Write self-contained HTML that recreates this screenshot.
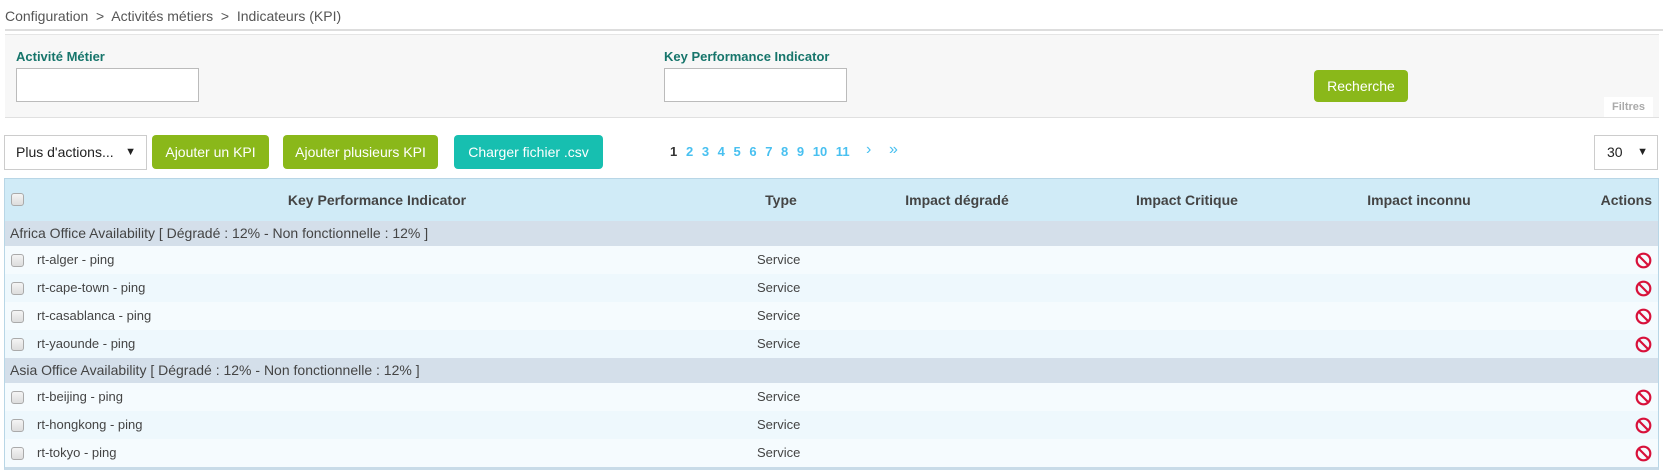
<!DOCTYPE html>
<html><head><meta charset="utf-8"><style>
*{box-sizing:border-box;margin:0;padding:0}
body{width:1663px;height:470px;overflow:hidden;background:#fff;font-family:"Liberation Sans",Arial,sans-serif;color:#333;position:relative}
.a{position:absolute}
.bc{left:5px;top:8px;font-size:14px;color:#555}
.ln{left:5px;top:29px;width:1658px;height:2px;background:#ddd}
.panel{left:5px;top:34px;width:1654px;height:84px;background:#f7f7f7;border-top:1px solid #e5e5e5;border-bottom:1px solid #e0e0e0}
.lbl{font-size:13px;font-weight:bold;color:#16756b}
.inp{background:#fff;border:1px solid #bbb;height:34px;width:183px}
.btn{color:#fff;font-size:14px;text-align:center;border-radius:4px;line-height:34px;height:34px}
.g{background:#8ab81a}.t{background:#17bfb0}
.sel{border:1px solid #ccc;background:#fff;height:35px;font-size:14px;line-height:33px;color:#222}
.pg{top:144px;font-size:13px;font-weight:bold;color:#48c0f0}
.tbl{left:4px;top:178px;width:1655px;height:292px;border:1px solid #b8d6e6;border-bottom:3px solid #c8dbe8;background:#f5fbfe}
.hd{left:0;top:0;width:100%;height:43px;background:#d0ebf7}
.th{top:13px;font-size:14px;font-weight:bold;color:#444;width:300px;text-align:center}
.grp{left:0;width:100%;height:25px;background:#d4dfea;font-size:14px;color:#444;line-height:25px;padding-left:5px}
.row{left:0;width:100%;height:28px;font-size:13px;color:#444;line-height:28px}
.row.e{background:#eef8fd}
.cb{position:absolute;left:6px;top:8px;width:13px;height:13px;border:1px solid #aaa;border-radius:3px;background:linear-gradient(#f4f4f4,#ddd)}
.nm{position:absolute;left:32px}
.sv{position:absolute;left:752px}
.ic{position:absolute;left:1630px;top:6px}
</style></head><body>
<div class="a bc">Configuration &nbsp;&gt;&nbsp; Activités métiers &nbsp;&gt;&nbsp; Indicateurs (KPI)</div>
<div class="a ln"></div>
<div class="a panel"></div>
<div class="a lbl" style="left:16px;top:49px">Activité Métier</div>
<div class="a inp" style="left:16px;top:68px"></div>
<div class="a lbl" style="left:664px;top:49px">Key Performance Indicator</div>
<div class="a inp" style="left:664px;top:68px"></div>
<div class="a btn g" style="left:1314px;top:70px;width:94px;height:32px;line-height:32px">Recherche</div>
<div class="a" style="left:1604px;top:97px;width:49px;height:20px;background:#fff;font-size:11px;font-weight:bold;color:#aaa;text-align:center;line-height:20px">Filtres</div>

<div class="a sel" style="left:4px;top:135px;width:143px;padding-left:11px">Plus d'actions...<span style="position:absolute;right:10px;font-size:11px">▼</span></div>
<div class="a btn g" style="left:152px;top:135px;width:117px">Ajouter un KPI</div>
<div class="a btn g" style="left:283px;top:135px;width:155px">Ajouter plusieurs KPI</div>
<div class="a btn t" style="left:454px;top:135px;width:149px">Charger fichier .csv</div>
<div class="a pg" style="left:670px;color:#333">1</div>
<div class="a pg" style="left:686px;word-spacing:5px">2 3 4 5 6 7 8 9 10 11</div>
<div class="a pg" style="left:866px;font-weight:normal;font-size:16px;top:141px">›</div>
<div class="a pg" style="left:889px;font-weight:normal;font-size:16px;top:141px">»</div>
<div class="a sel" style="left:1594px;top:135px;width:64px;padding-left:12px">30<span style="position:absolute;right:9px;font-size:11px">▼</span></div>

<div class="a tbl">
<div class="a hd"><span class="cb" style="top:14px"></span></div>
<div class="a th" style="left:222px">Key Performance Indicator</div>
<div class="a th" style="left:626px">Type</div>
<div class="a th" style="left:802px">Impact dégradé</div>
<div class="a th" style="left:1032px">Impact Critique</div>
<div class="a th" style="left:1264px">Impact inconnu</div>
<div class="a th" style="left:1347px;text-align:right">Actions</div>

<div class="a grp" style="top:42px">Africa Office Availability [ Dégradé : 12% - Non fonctionnelle : 12% ]</div>
<div class="a row" style="top:67px"><span class="cb"></span><span class="nm">rt-alger - ping</span><span class="sv">Service</span><svg class="ic" width="17" height="17" viewBox="0 0 17 17"><circle cx="8.5" cy="8.5" r="6.8" fill="none" stroke="#d8113a" stroke-width="2.2"/><line x1="4" y1="4" x2="13" y2="13" stroke="#d8113a" stroke-width="2.2"/></svg></div>
<div class="a row e" style="top:95px"><span class="cb"></span><span class="nm">rt-cape-town - ping</span><span class="sv">Service</span><svg class="ic" width="17" height="17" viewBox="0 0 17 17"><circle cx="8.5" cy="8.5" r="6.8" fill="none" stroke="#d8113a" stroke-width="2.2"/><line x1="4" y1="4" x2="13" y2="13" stroke="#d8113a" stroke-width="2.2"/></svg></div>
<div class="a row" style="top:123px"><span class="cb"></span><span class="nm">rt-casablanca - ping</span><span class="sv">Service</span><svg class="ic" width="17" height="17" viewBox="0 0 17 17"><circle cx="8.5" cy="8.5" r="6.8" fill="none" stroke="#d8113a" stroke-width="2.2"/><line x1="4" y1="4" x2="13" y2="13" stroke="#d8113a" stroke-width="2.2"/></svg></div>
<div class="a row e" style="top:151px"><span class="cb"></span><span class="nm">rt-yaounde - ping</span><span class="sv">Service</span><svg class="ic" width="17" height="17" viewBox="0 0 17 17"><circle cx="8.5" cy="8.5" r="6.8" fill="none" stroke="#d8113a" stroke-width="2.2"/><line x1="4" y1="4" x2="13" y2="13" stroke="#d8113a" stroke-width="2.2"/></svg></div>
<div class="a grp" style="top:179px">Asia Office Availability [ Dégradé : 12% - Non fonctionnelle : 12% ]</div>
<div class="a row" style="top:204px"><span class="cb"></span><span class="nm">rt-beijing - ping</span><span class="sv">Service</span><svg class="ic" width="17" height="17" viewBox="0 0 17 17"><circle cx="8.5" cy="8.5" r="6.8" fill="none" stroke="#d8113a" stroke-width="2.2"/><line x1="4" y1="4" x2="13" y2="13" stroke="#d8113a" stroke-width="2.2"/></svg></div>
<div class="a row e" style="top:232px"><span class="cb"></span><span class="nm">rt-hongkong - ping</span><span class="sv">Service</span><svg class="ic" width="17" height="17" viewBox="0 0 17 17"><circle cx="8.5" cy="8.5" r="6.8" fill="none" stroke="#d8113a" stroke-width="2.2"/><line x1="4" y1="4" x2="13" y2="13" stroke="#d8113a" stroke-width="2.2"/></svg></div>
<div class="a row" style="top:260px"><span class="cb"></span><span class="nm">rt-tokyo - ping</span><span class="sv">Service</span><svg class="ic" width="17" height="17" viewBox="0 0 17 17"><circle cx="8.5" cy="8.5" r="6.8" fill="none" stroke="#d8113a" stroke-width="2.2"/><line x1="4" y1="4" x2="13" y2="13" stroke="#d8113a" stroke-width="2.2"/></svg></div>
</div>
</body></html>
